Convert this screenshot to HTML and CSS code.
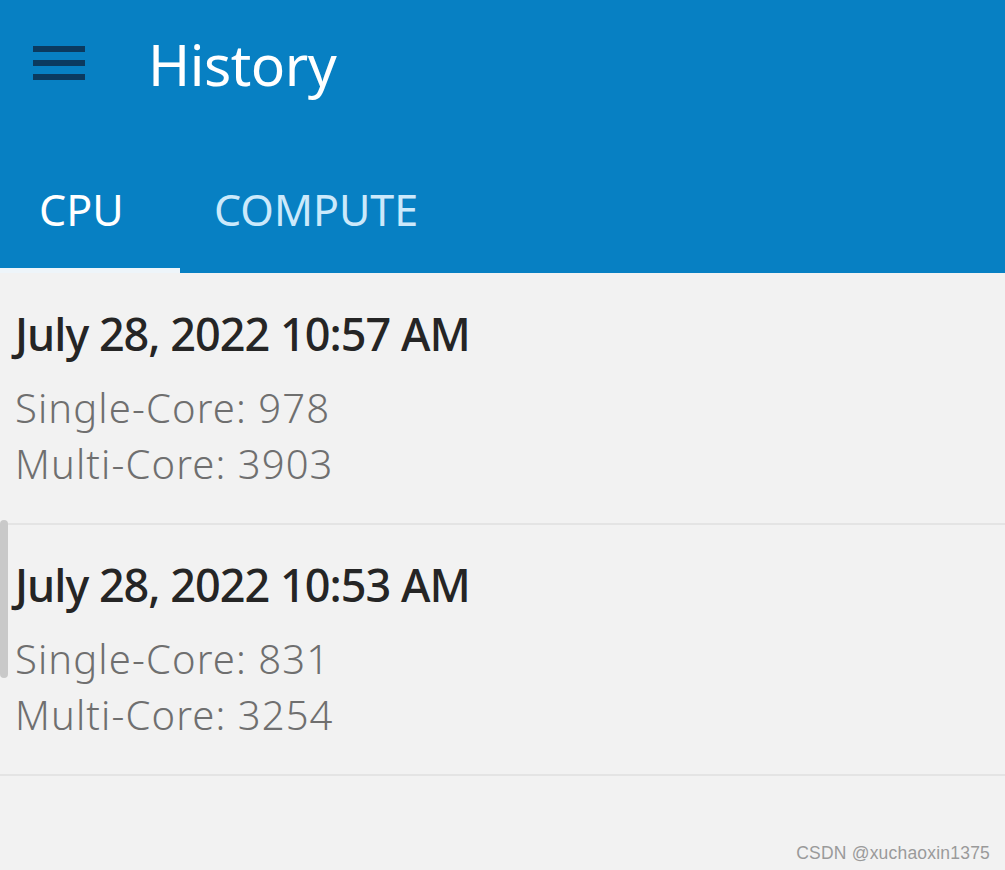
FILE: index.html
```html
<!DOCTYPE html>
<html>
<head>
<meta charset="utf-8">
<link rel="stylesheet" href="styles.css">
</head>
<body>
<div class="app">
  <header class="appbar">
    <div class="toolbar">
      <div class="menu" aria-label="menu">
        <span class="bar"></span><span class="bar"></span><span class="bar"></span>
      </div>
      <h1 class="title">History</h1>
    </div>
    <nav class="tabs">
      <div class="tab tab-active">CPU</div>
      <div class="tab tab-second">COMPUTE</div>
    </nav>
  </header>
  <main class="list">
    <div class="scrollbar"></div>
    <section class="item">
      <div class="date">July 28, 2022 10:57 AM</div>
      <div class="score">Single-Core: 978</div>
      <div class="score">Multi-Core: 3903</div>
    </section>
    <section class="item">
      <div class="date">July 28, 2022 10:53 AM</div>
      <div class="score">Single-Core: 831</div>
      <div class="score">Multi-Core: 3254</div>
    </section>
  </main>
  <div class="watermark">CSDN @xuchaoxin1375</div>
</div>
</body>
</html>
```
FILE: styles.css
```css
html, body {
  margin: 0;
  padding: 0;
  background: #f2f2f2;
}
body {
  font-family: "Noto Sans", "Open Sans", sans-serif;
  width: 1005px;
  height: 870px;
  overflow: hidden;
}
.app {
  position: relative;
  width: 1005px;
  height: 870px;
  background: #f2f2f2;
}
.appbar {
  background: #0780c3;
  display: flex;
  flex-direction: column;
}
.toolbar {
  height: 141px;
  display: flex;
  align-items: flex-start;
}
.menu {
  width: 52px;
  margin-left: 33px;
  margin-top: 46px;
  display: flex;
  flex-direction: column;
  gap: 8px;
}
.bar {
  display: block;
  height: 6px;
  background: #0b3a5f;
}
.title {
  margin: 0;
  margin-left: 63px;
  font-weight: 400;
  font-size: 57px;
  line-height: 70px;
  padding-top: 29px;
  color: #ffffff;
  letter-spacing: -0.5px;
}
.tabs {
  height: 132px;
  display: flex;
}
.tab {
  font-size: 43px;
  font-weight: 400;
  box-sizing: border-box;
  height: 132px;
  line-height: 138px;
}
.tab-active {
  width: 180px;
  padding-left: 39px;
  color: #ffffff;
  border-bottom: 5px solid #eef5fa;
}
.tab-second {
  padding-left: 34px;
  color: #cbe9fb;
}
.list {
  position: relative;
  display: flex;
  flex-direction: column;
  margin-top: 1px;
}
.scrollbar {
  position: absolute;
  left: 0;
  top: 246px;
  width: 8px;
  height: 158px;
  border-radius: 4px;
  background: #c9c9c9;
}
.item {
  padding: 32px 0 31px 15px;
  border-bottom: 2px solid #e4e4e4;
}
.date {
  font-size: 45px;
  font-weight: 500;
  line-height: 56px;
  color: #252525;
  margin-bottom: 18px;
  letter-spacing: -1px;
}
.score {
  font-size: 40px;
  font-weight: 300;
  line-height: 56px;
  color: #6f6f6f;
  letter-spacing: 1.1px;
}
.watermark {
  position: absolute;
  right: 15px;
  bottom: 6px;
  font-family: "Liberation Sans", Arial, sans-serif;
  font-size: 17.5px;
  color: #9a9a9a;
  letter-spacing: 0.2px;
}
```
